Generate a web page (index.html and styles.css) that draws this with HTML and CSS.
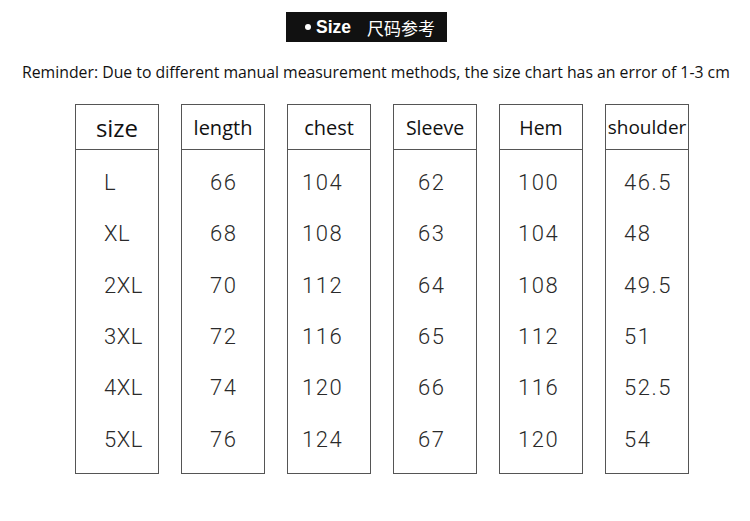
FILE: index.html
```html
<!DOCTYPE html>
<html>
<head>
<meta charset="utf-8">
<link rel="stylesheet" href="styles.css">
</head>
<body>
<div class="page">
  <div class="title-row">
    <div class="title"><span class="dot"></span><span class="en">Size</span><span class="cn">尺码参考</span></div>
  </div>
  <p class="reminder">Reminder: Due to different manual measurement methods, the size chart has an error of 1-3 cm</p>
  <div class="table">
    <div class="col c-size">
      <div class="head big">size</div>
      <div class="body"><span>L</span><span>XL</span><span>2XL</span><span>3XL</span><span>4XL</span><span>5XL</span></div>
    </div>
    <div class="col c-length">
      <div class="head">length</div>
      <div class="body"><span>66</span><span>68</span><span>70</span><span>72</span><span>74</span><span>76</span></div>
    </div>
    <div class="col c-chest">
      <div class="head">chest</div>
      <div class="body"><span>104</span><span>108</span><span>112</span><span>116</span><span>120</span><span>124</span></div>
    </div>
    <div class="col c-sleeve">
      <div class="head mid">Sleeve</div>
      <div class="body"><span>62</span><span>63</span><span>64</span><span>65</span><span>66</span><span>67</span></div>
    </div>
    <div class="col c-hem">
      <div class="head mid">Hem</div>
      <div class="body"><span>100</span><span>104</span><span>108</span><span>112</span><span>116</span><span>120</span></div>
    </div>
    <div class="col c-shoulder">
      <div class="head small">shoulder</div>
      <div class="body"><span>46.5</span><span>48</span><span>49.5</span><span>51</span><span>52.5</span><span>54</span></div>
    </div>
  </div>
</div>
</body>
</html>
```

FILE: styles.css
```css
* { box-sizing: border-box; }
html, body { margin: 0; padding: 0; background: #fff; }
.page { width: 750px; height: 521px; font-family: "Open Sans", "Noto Sans", sans-serif; color: #111; }
.title-row { padding-top: 12px; padding-left: 286px; }
.title {
  width: 161px; height: 30px; background: #111; color: #fff;
  display: flex; align-items: center; padding-left: 19px;
}
.dot { width: 6px; height: 6px; border-radius: 50%; background: #fff; margin-right: 5px; }
.en { font-family: "Liberation Sans", Arial, sans-serif; font-weight: bold; font-size: 17.5px; margin-right: 16px; }
.cn { font-family: "Noto Sans CJK SC", sans-serif; font-size: 17px; }
.reminder { margin: 0; padding: 19px 0 0 22px; font-size: 15.8px; line-height: 22px; color: #111; white-space: nowrap; }
.table { display: flex; gap: 22px; padding: 21px 0 0 75px; }
.col { width: 84px; height: 370px; border: 1.5px solid #555; display: flex; flex-direction: column; }
.head { height: 45px; border-bottom: 1.5px solid #555; display: flex; align-items: center; justify-content: center; font-size: 20px; color: #111; }
.head.big { font-size: 24px; }
.head.mid { font-size: 19.5px; }
.head.small { font-size: 19px; }
.body { display: flex; flex-direction: column; padding: 7px 0 8px; flex: 1; }
.body span { flex: 1; display: flex; align-items: center; font-family: "Roboto", sans-serif; font-weight: 300; font-size: 22px; letter-spacing: 1.5px; color: #2a2a2a; }
.c-size .body span { padding-left: 28px; letter-spacing: 0.5px; }
.c-length .body span { padding-left: 28px; }
.c-chest .body span { padding-left: 14px; }
.c-sleeve .body span { padding-left: 24px; }
.c-hem .body span { padding-left: 18px; }
.c-shoulder .body span { padding-left: 18px; }
```
